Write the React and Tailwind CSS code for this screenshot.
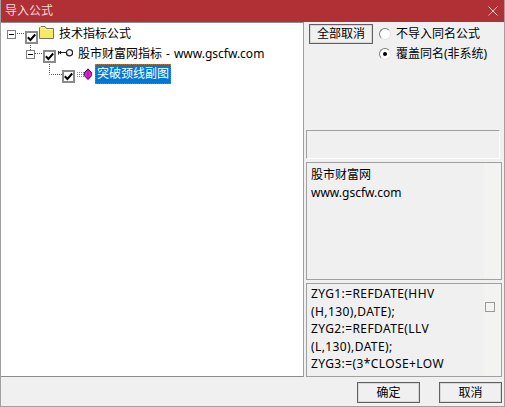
const font = { fontFamily: '"Noto Sans", "Noto Sans CJK SC", sans-serif' };

function Check({ className = "" }) {
  return (
    <span className={"flex h-[13px] w-[13px] shrink-0 items-center justify-center border-2 border-[#8a8a8a] bg-white " + className}>
      <svg width="9" height="9" viewBox="0 0 9 9">
        <path d="M0.8 4.2 L3.4 7 L8.2 1.5" fill="none" stroke="#000" strokeWidth="2" />
      </svg>
    </span>
  );
}

function Expander() {
  return (
    <span className="mt-[6px] flex h-[9px] w-[9px] shrink-0 items-center justify-center border border-[#7f7f7f] bg-white">
      <span className="h-px w-[5px] bg-black" />
    </span>
  );
}

function Folder() {
  return (
    <svg width="15" height="13" viewBox="0 0 15 13" className="mt-[2px] shrink-0">
      <path d="M0.5 12.5 V2 L2 0.5 H6 L7.5 2.5 H14.5 V12.5 Z" fill="#f7ea62" stroke="#77755a" />
      <path d="M1.5 1.5 H6" stroke="#fffbd0" />
      <path d="M1.5 3.5 H13.5" stroke="#fff7a8" />
    </svg>
  );
}

function Key() {
  return (
    <svg width="15" height="8" viewBox="0 0 15 8" className="mt-[5px] shrink-0">
      <path d="M0.5 2 V5.5 M2.5 2 V5 M0.5 3.5 H8" stroke="#222" strokeWidth="1.2" fill="none" />
      <circle cx="11.5" cy="3.8" r="3.1" fill="#fff" stroke="#222" strokeWidth="1.3" />
    </svg>
  );
}

function Gem() {
  return (
    <svg width="15" height="13" viewBox="0 0 15 13" className="mt-[4px] shrink-0">
      <path d="M0 4.5 H7 M0 6.5 H7 M0 8.5 H7" stroke="#8a8a8a" strokeDasharray="1 1" />
      <path d="M11 0.8 L14.8 5 V7.5 L11 11.5 L7.2 7.5 V5 Z" fill="#ee18d8" stroke="#2f1038" />
      <path d="M11 2 V10.5" stroke="#a010a0" />
    </svg>
  );
}

function Radio({ on, label }) {
  return (
    <div className="flex h-[20px] items-center gap-[5px]">
      <span className="flex h-[12px] w-[12px] items-center justify-center rounded-full border border-b-[#e4e4e4] border-l-[#808080] border-r-[#e4e4e4] border-t-[#808080] bg-white">
        {on && <span className="h-[4px] w-[4px] rounded-full bg-black" />}
      </span>
      <span className="text-[12px] leading-none text-black">{label}</span>
    </div>
  );
}

export default function App() {
  return (
    <div className="flex h-[407px] w-[505px] flex-col overflow-hidden border-x border-b border-[#a0a0a0] bg-[#f0f0f0]" style={font}>
      <div className="-mx-px flex h-[22px] shrink-0 items-center justify-between bg-[#b03036] pl-[5px] pr-[7px]">
        <span className="text-[12px] leading-none text-[#f0d8d8]">导入公式</span>
        <svg width="10" height="10" viewBox="0 0 10 10">
          <path d="M0.5 0.5 L9.5 9.5 M9.5 0.5 L0.5 9.5" stroke="#e8c8c8" strokeWidth="1" />
        </svg>
      </div>

      <div className="flex min-h-0 flex-1 gap-[2px] pr-[2px]">
        <div className="relative h-[355px] w-[303px] shrink-0 border-y border-r border-y-[#8c8c8c] border-r-[#a0a0a0] bg-white pt-px text-[12px] text-black">
          <svg className="absolute left-0 top-0" width="90" height="70">
            <path d="M16 10.5 H23 M29.5 20 V27 M34 30.5 H42 M48.5 39 V51.5 H61" stroke="#555" strokeDasharray="1 1" fill="none" />
          </svg>
          <div className="relative flex h-[20px] items-start pl-[6px]">
            <Expander />
            <Check className="ml-[9px] mt-[7px]" />
            <span className="ml-px"><Folder /></span>
            <span className="ml-[5px] self-center leading-none">技术指标公式</span>
          </div>
          <div className="relative flex h-[20px] items-start pl-[25px]">
            <Expander />
            <Check className="ml-[8px] mt-[6px]" />
            <span className="ml-[2px]"><Key /></span>
            <span className="ml-[5px] flex gap-[4px] self-center whitespace-nowrap leading-none">
              <span>股市财富网指标</span><span>-</span><span>www.gscfw.com</span>
            </span>
          </div>
          <div className="relative flex h-[20px] items-start pl-[61px]">
            <Check className="mt-[6px]" />
            <span className="ml-[2px]"><Gem /></span>
            <span className="ml-[3px] border border-dotted border-[#c07020] bg-[#0078d7] px-px leading-[18px] text-white">突破颈线副图</span>
          </div>
        </div>

        <div className="flex min-w-0 flex-1 flex-col">
          <div className="flex h-[108px] shrink-0 pl-[3px] pt-[2px]">
            <button className="h-[20px] w-[64px] border border-[#606060] bg-[#f0f0f0] text-[12px] leading-none text-black shadow-[inset_0_0_0_1px_#d8d8d8]">全部取消</button>
            <div className="ml-[6px] flex flex-col">
              <Radio label="不导入同名公式" />
              <Radio on label="覆盖同名(非系统)" />
            </div>
          </div>
          <div className="mr-[2px] h-[29px] shrink-0 border border-b-white border-l-[#a0a0a0] border-r-white border-t-[#a0a0a0] bg-[#f0f0f0]" />
          <div className="mt-[3px] flex h-[118px] shrink-0 border border-[#a0a0a0] bg-[#f0f0f0] text-[12px] leading-[18px] text-black">
            <div className="min-w-0 flex-1 pl-[4px] pt-[3px]">
              <div>股市财富网</div>
              <div>www.gscfw.com</div>
            </div>
            <div className="w-[17px] shrink-0 bg-[#f3f3f1]" />
          </div>
          <div className="relative mt-[3px] flex h-[94px] shrink-0 border border-[#a0a0a0] bg-[#f0f0f0] text-[12px] leading-[17.5px] tracking-[0.4px] text-black">
            <div className="min-w-0 flex-1 whitespace-nowrap pl-[4px] pt-px">
              <div>ZYG1:=REFDATE(HHV</div>
              <div>(H,130),DATE);</div>
              <div>ZYG2:=REFDATE(LLV</div>
              <div>(L,130),DATE);</div>
              <div>ZYG3:=(3*CLOSE+LOW</div>
            </div>
            <div className="w-[17px] shrink-0 bg-[#f3f3f1]" />
            <span className="absolute right-[6px] top-[18px] h-[10px] w-[10px] border border-[#9a9a9a]" />
          </div>
        </div>
      </div>

      <div className="flex h-[29px] shrink-0 items-start justify-end gap-[19px] pr-[2px] pt-[5px]">
        <button className="h-[21px] w-[63px] border border-[#606060] bg-[#f0f0f0] text-[12px] leading-none text-black shadow-[inset_0_0_0_1px_#d8d8d8]">确定</button>
        <button className="h-[21px] w-[63px] border border-[#606060] bg-[#f0f0f0] text-[12px] leading-none text-black shadow-[inset_0_0_0_1px_#d8d8d8]">取消</button>
      </div>
    </div>
  );
}
